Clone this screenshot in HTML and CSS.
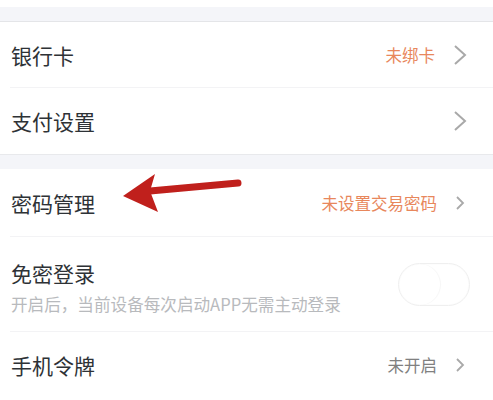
FILE: index.html
```html
<!DOCTYPE html>
<html lang="zh-CN">
<head>
  <meta charset="UTF-8">
  <meta name="viewport" content="width=device-width, initial-scale=1.0">
  <title>账户安全</title>
  <link rel="stylesheet" href="styles.css">
</head>
<body>
  <div class="page">
    <div class="top-space"></div>
    <div class="gap gap-first"></div>

    <div class="group">
      <div class="row row-line">
        <span class="label">银行卡</span>
        <span class="value warn">未绑卡</span>
        <svg class="chev" width="14" height="22" viewBox="0 0 14 22"><path d="M2 2 L12 11 L2 20" fill="none" stroke="#a9a9a9" stroke-width="2"/></svg>
      </div>
      <div class="row">
        <span class="label">支付设置</span>
        <svg class="chev" width="14" height="22" viewBox="0 0 14 22"><path d="M2 2 L12 11 L2 20" fill="none" stroke="#a9a9a9" stroke-width="2"/></svg>
      </div>
    </div>

    <div class="gap"></div>

    <div class="group">
      <div class="row row-line row-pwd">
        <span class="label">密码管理</span>
        <span class="value warn">未设置交易密码</span>
        <svg class="chev small" width="10" height="16" viewBox="0 0 10 16"><path d="M2 2 L8 8 L2 14" fill="none" stroke="#a9a9a9" stroke-width="1.8"/></svg>
      </div>
      <div class="row row-line row-tall">
        <div class="label-box">
          <span class="label">免密登录</span>
          <span class="sub">开启后，当前设备每次启动APP无需主动登录</span>
        </div>
        <div class="switch"><div class="knob"></div></div>
      </div>
      <div class="row">
        <span class="label">手机令牌</span>
        <span class="value muted">未开启</span>
        <svg class="chev small" width="10" height="16" viewBox="0 0 10 16"><path d="M2 2 L8 8 L2 14" fill="none" stroke="#a9a9a9" stroke-width="1.8"/></svg>
      </div>
    </div>

    <svg class="pointer" width="493" height="400" viewBox="0 0 493 400">
      <path d="M238 183 L150 191" stroke="#c0201c" stroke-width="7" stroke-linecap="round" fill="none"/>
      <path d="M123 196 L155 174 L150 191 L158 212 Z" fill="#c0201c"/>
    </svg>
  </div>
</body>
</html>
```

FILE: styles.css
```css
body {
  margin: 0;
  padding: 0;
  background: #fff;
  font-family: "Noto Sans CJK SC", "Noto Sans", sans-serif;
}
.page {
  position: relative;
  width: 493px;
  height: 400px;
  overflow: hidden;
  background: #fff;
}
.top-space {
  height: 7px;
}
.gap {
  height: 14px;
  background: #f4f5f9;
  border-top: 1px solid #e8e9ec;
}
.gap-first {
  border-top: none;
  border-bottom: 1px solid #e4e5e8;
}
.row {
  display: flex;
  align-items: center;
  height: 66px;
  padding: 0 26px 0 11px;
  position: relative;
}
.row-line::after {
  content: "";
  position: absolute;
  left: 10px;
  right: 0;
  bottom: 0;
  height: 1px;
  background: #f3f3f5;
}
.row-pwd {
  height: 68px;
}
.row-tall {
  height: 95px;
  padding-right: 23px;
}
.label {
  flex: 1;
  font-size: 21px;
  color: #2e3236;
}
.label-box {
  flex: 1;
  display: flex;
  flex-direction: column;
  gap: 4px;
  padding-top: 4px;
}
.sub {
  font-size: 16.6px;
  color: #b8babd;
}
.value {
  font-size: 16.5px;
  margin-right: 18px;
}
.warn {
  color: #e8875c;
}
.muted {
  color: #808080;
}
.chev.small {
  margin-right: 2px;
}
.switch {
  width: 70px;
  height: 41px;
  border: 1px solid #efefef;
  border-radius: 22px;
  box-shadow: inset 0 0 2px rgba(0, 0, 0, 0.03);
  position: relative;
}
.knob {
  width: 41px;
  height: 41px;
  border-radius: 50%;
  box-shadow: 1px 0 1px rgba(0, 0, 0, 0.04);
}
.pointer {
  position: absolute;
  left: 0;
  top: 0;
  pointer-events: none;
}
```
